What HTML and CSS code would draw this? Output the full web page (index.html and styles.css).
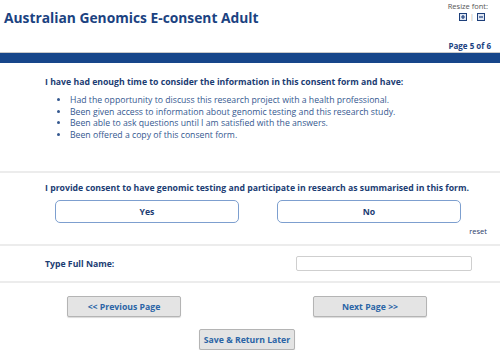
FILE: index.html
```html
<!DOCTYPE html>
<html lang="en">
<head>
    <meta charset="UTF-8">
    <meta name="viewport" content="width=device-width, initial-scale=1.0">
    <title>Australian Genomics E-consent Adult</title>
    <link rel="stylesheet" href="styles.css">
</head>
<body>
    <header class="top">
        <h1>Australian Genomics E-consent Adult</h1>
        <div class="resize">
            <span class="resize-label">Resize font:</span>
            <span class="resize-icons">
                <svg width="8" height="8" viewBox="0 0 8 8"><rect x="0.5" y="0.5" width="7" height="7" fill="#dfe6f2" stroke="#1d3f7a" stroke-width="1"/><path d="M2 4h4M4 2v4" stroke="#1d3f7a" stroke-width="1.2"/></svg>
                <span class="sep">|</span>
                <svg width="8" height="8" viewBox="0 0 8 8"><rect x="0.5" y="0.5" width="7" height="7" fill="#dfe6f2" stroke="#1d3f7a" stroke-width="1"/><path d="M2 4h4" stroke="#1d3f7a" stroke-width="1.2"/></svg>
            </span>
        </div>
    </header>

    <div class="page-no">Page 5 of 6</div>
    <div class="bar"></div>

    <section class="block intro">
        <p class="lead">I have had enough time to consider the information in this consent form and have:</p>
        <ul>
            <li>Had the opportunity to discuss this research project with a health professional.</li>
            <li>Been given access to information about genomic testing and this research study.</li>
            <li>Been able to ask questions until I am satisfied with the answers.</li>
            <li>Been offered a copy of this consent form.</li>
        </ul>
    </section>

    <section class="block consent">
        <p class="lead">I provide consent to have genomic testing and participate in research as summarised in this form.</p>
        <div class="choices">
            <button class="choice">Yes</button>
            <button class="choice">No</button>
        </div>
        <div class="reset">reset</div>
    </section>

    <section class="block name-row">
        <label class="lead" for="fullname">Type Full Name:</label>
        <input type="text" id="fullname" class="name-input">
    </section>

    <div class="nav">
        <div class="nav-row">
            <button class="nav-btn">&lt;&lt; Previous Page</button>
            <button class="nav-btn">Next Page &gt;&gt;</button>
        </div>
        <button class="nav-btn save">Save &amp; Return Later</button>
    </div>
</body>
</html>
```

FILE: styles.css
```css
body {
    font-family: "Open Sans", Arial, sans-serif;
    background-color: #fff;
    color: #1c3d73;
    margin: 0;
}

.top {
    display: flex;
    justify-content: space-between;
    align-items: flex-start;
    padding: 0 9px 0 4px;
}

.top h1 {
    margin: 8px 0 0;
    font-size: 13.8px;
    line-height: 20px;
    font-weight: 700;
    color: #1b4281;
}

.resize {
    display: flex;
    flex-direction: column;
    align-items: center;
    margin-top: 1px;
    margin-right: 3px;
    font-size: 7.5px;
    line-height: 10px;
    color: #555;
}

.resize-icons {
    display: flex;
    align-items: center;
    gap: 3px;
    margin-left: 8px;
    margin-top: 1px;
}

.resize-icons .sep {
    color: #999;
    font-size: 7px;
}

.page-no {
    text-align: right;
    padding-right: 9px;
    margin-top: 12px;
    font-size: 8px;
    line-height: 11px;
    font-weight: 700;
    color: #1b4281;
}

.bar {
    margin-top: 1px;
    height: 10px;
    background: #17468a;
    border-top: 1px solid #c9c9c9;
}

.block {
    padding: 0 28px 0 45px;
    border-bottom: 2px solid #ececec;
}

.lead {
    font-size: 8.7px;
    font-weight: 700;
    color: #1c3d73;
    margin: 0;
}

.intro {
    padding-top: 13px;
    padding-bottom: 30px;
}

.intro ul {
    margin: 7px 0 0;
    padding-left: 25px;
    font-size: 8.7px;
    line-height: 11.5px;
    color: #35588f;
}

.consent {
    padding-top: 9px;
    padding-bottom: 8px;
}

.choices {
    display: flex;
    justify-content: space-between;
    padding: 6px 11px 0 10px;
}

.choice {
    width: 184px;
    height: 23px;
    background: #fff;
    border: 1px solid #7d9fcf;
    border-radius: 5px;
    font-family: inherit;
    font-size: 8.7px;
    font-weight: 700;
    color: #1c3d73;
}

.reset {
    text-align: right;
    margin-top: 3px;
    margin-right: -15px;
    font-size: 7.5px;
    color: #2a3a6a;
}

.name-row {
    display: flex;
    justify-content: space-between;
    align-items: center;
    padding-top: 10px;
    padding-bottom: 10px;
}

.name-input {
    width: 174px;
    height: 13px;
    padding: 0;
    border: 1px solid #cfcfcf;
    border-radius: 2px;
}

.nav {
    display: flex;
    flex-direction: column;
    align-items: center;
    padding-top: 13px;
    padding-right: 6px;
    gap: 12px;
}

.nav-row {
    display: flex;
    justify-content: space-between;
    width: 360px;
}

.nav-btn {
    width: 114px;
    height: 21px;
    padding: 0;
    white-space: nowrap;
    background: #e4e4e4;
    border: 1px solid #b4b4b4;
    border-radius: 2px;
    box-shadow: 0 1px 1px rgba(0, 0, 0, 0.15);
    font-family: inherit;
    font-size: 8.7px;
    font-weight: 700;
    color: #2b64a6;
    cursor: pointer;
}

.nav-btn.save {
    width: 96px;
}
```
